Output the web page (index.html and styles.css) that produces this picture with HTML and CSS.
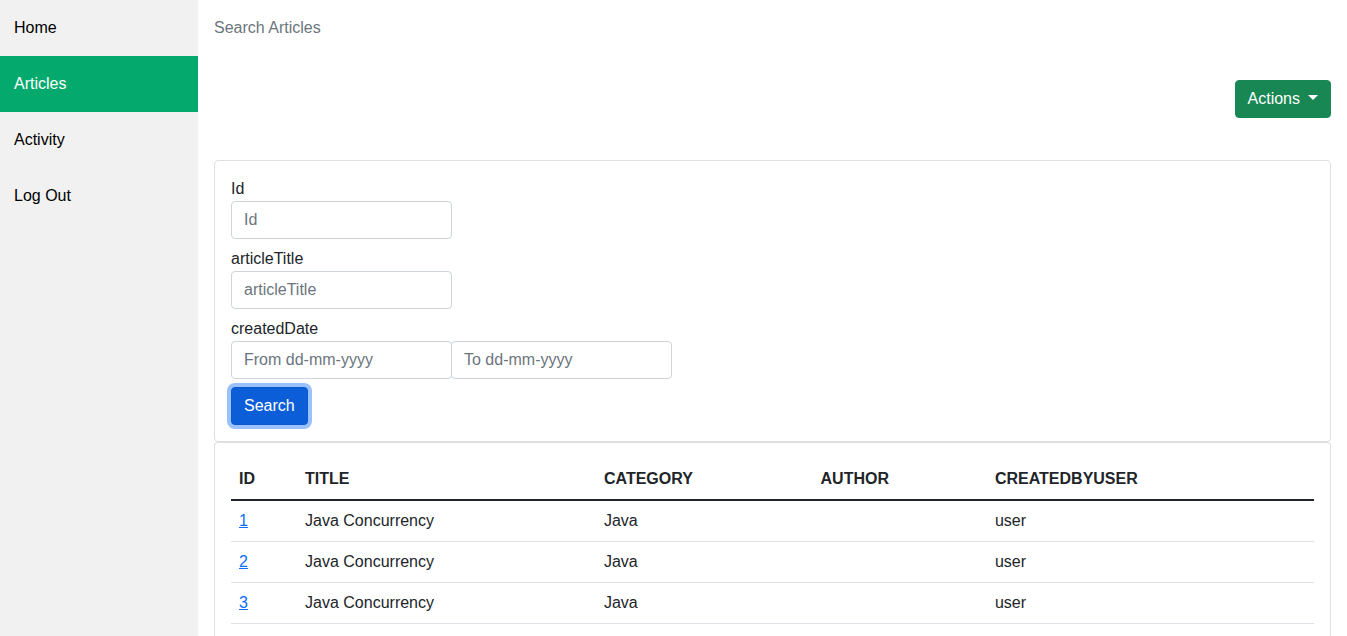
FILE: index.html
```html
<!DOCTYPE html>
<html lang="en">
<head>
  <meta charset="utf-8">
  <meta name="viewport" content="width=device-width, initial-scale=1">
  <title>Search Articles</title>
  <link rel="stylesheet" href="styles.css">
</head>
<body>
  <div class="layout">
    <nav class="sidebar">
      <a class="sidebar-link" href="#home">Home</a>
      <a class="sidebar-link active" href="#articles">Articles</a>
      <a class="sidebar-link" href="#activity">Activity</a>
      <a class="sidebar-link" href="#logout">Log Out</a>
    </nav>
    <main class="content">
      <div class="breadcrumb">Search Articles</div>
      <div class="toolbar">
        <button class="btn btn-success" type="button">Actions<span class="caret"></span></button>
      </div>
      <form class="card search-form">
        <div class="field">
          <label for="id">Id</label>
          <input class="input" id="id" type="text" placeholder="Id">
        </div>
        <div class="field">
          <label for="title">articleTitle</label>
          <input class="input" id="title" type="text" placeholder="articleTitle">
        </div>
        <div class="field">
          <label for="from">createdDate</label>
          <div class="range">
            <input class="input" id="from" type="text" placeholder="From dd-mm-yyyy">
            <input class="input" id="to" type="text" placeholder="To dd-mm-yyyy" aria-label="createdDate to">
          </div>
        </div>
        <button class="btn btn-primary" type="button">Search</button>
      </form>
      <section class="card results">
        <table class="table">
          <colgroup>
            <col class="col-id">
            <col class="col-title">
            <col class="col-category">
            <col class="col-author">
            <col>
          </colgroup>
          <thead>
            <tr><th>ID</th><th>TITLE</th><th>CATEGORY</th><th>AUTHOR</th><th>CREATEDBYUSER</th></tr>
          </thead>
          <tbody>
            <tr><td><a href="#1">1</a></td><td>Java Concurrency</td><td>Java</td><td></td><td>user</td></tr>
            <tr><td><a href="#2">2</a></td><td>Java Concurrency</td><td>Java</td><td></td><td>user</td></tr>
            <tr><td><a href="#3">3</a></td><td>Java Concurrency</td><td>Java</td><td></td><td>user</td></tr>
          </tbody>
        </table>
      </section>
    </main>
  </div>
</body>
</html>
```

FILE: styles.css
```css
* {
  box-sizing: border-box;
}

body {
  margin: 0;
  background: #fff;
  color: #212529;
  font-family: "Liberation Sans", Arial, sans-serif;
  font-size: 16px;
  line-height: 24px;
}

.layout {
  display: flex;
  min-height: 100vh;
}

.sidebar {
  flex: 0 0 198px;
  background: #f1f1f1;
}

.sidebar-link {
  display: block;
  padding: 16px 14px;
  color: #000;
  text-decoration: none;
}

.sidebar-link.active {
  background: #04aa6d;
  color: #fff;
}

.content {
  flex: 1;
  min-width: 0;
  display: flex;
  flex-direction: column;
  padding: 16px 16px 0;
}

.breadcrumb {
  color: #6c757d;
}

.toolbar {
  display: flex;
  justify-content: flex-end;
  padding: 40px 0 42px;
}

.btn {
  display: inline-flex;
  align-items: center;
  padding: 6px 12px;
  border: 1px solid transparent;
  border-radius: 4px;
  color: #fff;
  font: inherit;
  cursor: pointer;
}

.btn-success {
  background: #198754;
  border-color: #198754;
}

.btn-primary {
  background: #0b5ed7;
  border-color: #0a58ca;
  box-shadow: 0 0 0 4px #98c1fe;
}

.caret {
  margin: -4px 0 0 8px;
  border-top: 5px solid #fff;
  border-left: 5px solid transparent;
  border-right: 5px solid transparent;
}

.card {
  padding: 16px;
  border: 1px solid #dfdfdf;
  border-radius: 4px;
}

.search-form {
  display: flex;
  flex-direction: column;
  align-items: flex-start;
  gap: 8px;
}

.field label {
  display: block;
}

.input {
  display: block;
  width: 221px;
  height: 38px;
  padding: 6px 12px;
  border: 1px solid #ced4da;
  border-radius: 4px;
  background: #fff;
  color: #212529;
  font: inherit;
}

.input::placeholder {
  color: #6c757d;
  opacity: 1;
}

.range {
  display: flex;
}

.range .input + .input {
  margin-left: -1px;
}

.results {
  flex: 1;
  border-bottom: 0;
  border-bottom-left-radius: 0;
  border-bottom-right-radius: 0;
}

.table {
  width: 100%;
  table-layout: fixed;
  border-spacing: 0;
}

.col-id {
  width: 6.1%;
}

.col-title {
  width: 27.6%;
}

.col-category {
  width: 20%;
}

.col-author {
  width: 16.1%;
}

.table th,
.table td {
  padding: 8px;
  text-align: left;
  border-bottom: 1px solid #dee2e6;
}

.table th {
  border-bottom: 2px solid #212529;
}

.table a {
  color: #0d6efd;
}
```
